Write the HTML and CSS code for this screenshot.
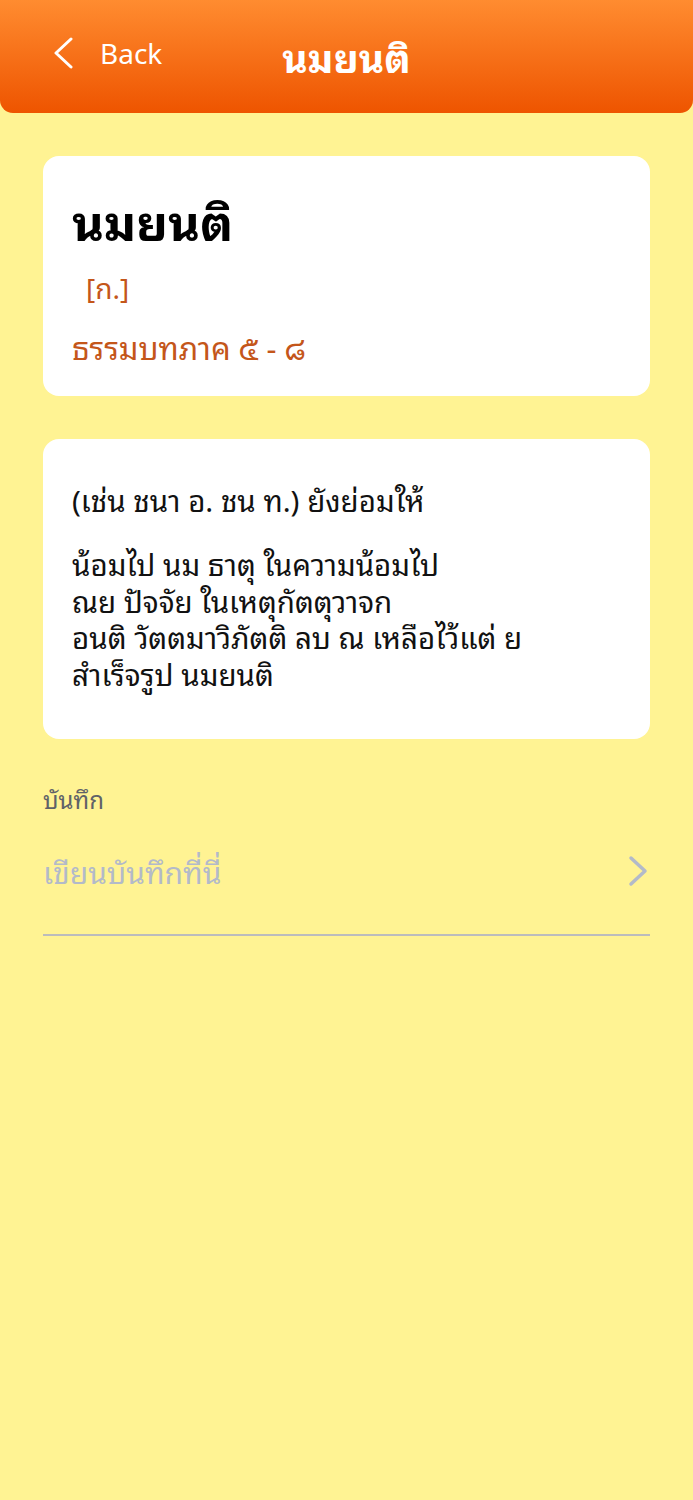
FILE: index.html
```html
<!DOCTYPE html>
<html lang="th">
<head>
<meta charset="utf-8">
<title>นมยนติ</title>
<link rel="stylesheet" href="styles.css">
</head>
<body>
<header class="topbar">
  <a class="back">
    <svg class="back-icon" width="20" height="32" viewBox="0 0 20 32"><polyline points="17,2 2,16 17,30" fill="none" stroke="#fff" stroke-width="3" stroke-linecap="round" stroke-linejoin="round"/></svg>
    <span class="back-text">Back</span>
  </a>
  <h1 class="title">นมยนติ</h1>
</header>
<main class="content">
  <section class="card head-card">
    <h2 class="word">นมยนติ</h2>
    <div class="tag">[ก.]</div>
    <div class="source">ธรรมบทภาค ๕ - ๘</div>
  </section>
  <section class="card body-card">
    <p class="intro">(เช่น ชนา อ. ชน ท.) ยังย่อมให้</p>
    <p class="lines">น้อมไป นม ธาตุ ในความน้อมไป<br>ณย ปัจจัย ในเหตุกัตตุวาจก<br>อนติ วัตตมาวิภัตติ ลบ ณ เหลือไว้แต่ ย<br>สำเร็จรูป นมยนติ</p>
  </section>
  <section class="note">
    <div class="note-label">บันทึก</div>
    <div class="note-field">
      <span class="placeholder">เขียนบันทึกที่นี่</span>
      <svg class="chev" width="20" height="32" viewBox="0 0 20 32"><polyline points="3,3 17,16 3,29" fill="none" stroke="#b3bac9" stroke-width="3.5" stroke-linecap="round" stroke-linejoin="round"/></svg>
    </div>
  </section>
</main>
</body>
</html>
```
FILE: styles.css
```css
* { box-sizing: border-box; }
html, body { margin: 0; padding: 0; }
body {
  background: #fff393;
  font-family: "Noto Sans Thai Looped", "Noto Sans", sans-serif;
  min-height: 1500px;
  color: #111;
}
.topbar {
  height: 113px;
  background: linear-gradient(180deg, #ff8c30 0%, #ee5400 100%);
  border-radius: 0 0 13px 13px;
  display: flex;
  align-items: center;
  position: relative;
  padding: 0 0 8px 54px;
}
.back {
  display: flex;
  align-items: center;
  color: #fff;
  gap: 26px;
}
.back-icon { display: block; }
.back-text {
  font-family: "Noto Sans", sans-serif;
  font-size: 28px;
  color: #fff;
  line-height: 1;
}
.title {
  position: absolute;
  left: 0;
  right: 0;
  top: 27px;
  margin: 0;
  text-align: center;
  color: #fff;
  font-size: 39px;
  font-weight: 700;
  line-height: 58px;
}
.content {
  padding: 43px 43px 0 43px;
}
.card {
  background: #fff;
  border-radius: 16px;
}
.head-card {
  padding: 27px 29px 24px;
  height: 240px;
}
.word {
  margin: 0;
  font-size: 49px;
  font-weight: 700;
  line-height: 72px;
  color: #000;
}
.tag {
  margin: 13px 0 0 14px;
  font-family: "Noto Sans", "Noto Sans Thai Looped", sans-serif;
  font-size: 28px;
  line-height: 40px;
  font-weight: 370;
  color: #c4561a;
}
.source {
  margin-top: 17px;
  font-size: 31px;
  line-height: 42px;
  font-weight: 370;
  color: #c4561a;
}
.body-card {
  margin-top: 43px;
  padding: 38px 29px 40px;
  height: 300px;
}
.intro {
  margin: 0;
  font-size: 29.5px;
  line-height: 44px;
  font-weight: 370;
}
.lines {
  margin: 24px 0 0;
  font-size: 29.5px;
  line-height: 36.6px;
  font-weight: 370;
}
.note {
  margin-top: 40px;
}
.note-label {
  font-size: 24px;
  color: #5f6268;
  line-height: 38px;
  font-weight: 370;
}
.note-field {
  display: flex;
  align-items: center;
  justify-content: space-between;
  height: 119px;
  border-bottom: 2px solid #bcbcbc;
  padding-bottom: 10px;
}
.placeholder {
  font-size: 30px;
  color: #b3bac9;
  font-weight: 370;
}
.chev { display: block; margin-right: 2px; }
```
